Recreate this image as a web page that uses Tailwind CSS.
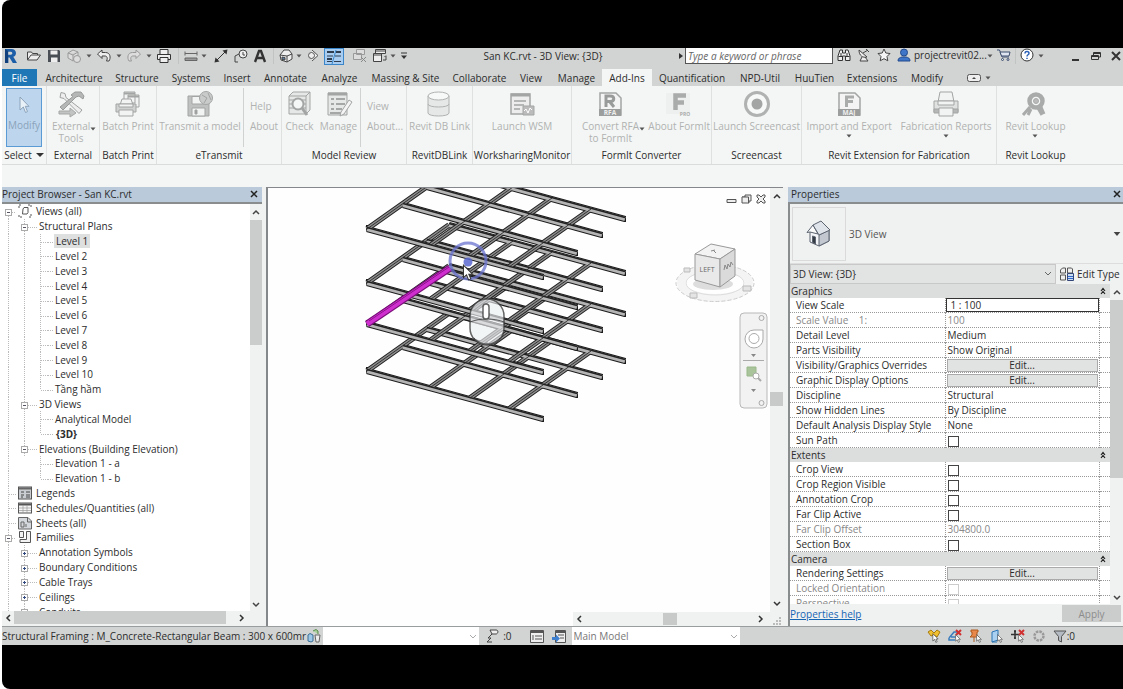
<!DOCTYPE html>
<html lang="en">
<head>
<meta charset="utf-8">
<title>San KC.rvt - 3D View: {3D}</title>
<script src="https://cdn.jsdelivr.net/npm/@tailwindcss/browser@4"></script>
</head>
<body class="bg-white font-['Open_Sans','Noto_Sans',sans-serif] text-[10px] leading-3 text-[#2c2c2c]">

<svg class="hidden" aria-hidden="true">
  <defs>
    <symbol id="down" viewBox="0 0 6 4"><path d="M0.5 0.5h5L3 3.5z" fill="#555"/></symbol>
    <symbol id="guide-v" viewBox="0 0 16 15"><path d="M8.5 0v15" stroke="#bbb" stroke-dasharray="1 1"/></symbol>
    <symbol id="guide-t" viewBox="0 0 16 15"><path d="M8.5 0v15M9 8.5h7" stroke="#bbb" stroke-dasharray="1 1" fill="none"/></symbol>
    <symbol id="guide-l" viewBox="0 0 16 15"><path d="M8.5 0v8M9 8.5h7" stroke="#bbb" stroke-dasharray="1 1" fill="none"/></symbol>
    <symbol id="box-minus" viewBox="0 0 16 15"><path d="M8.5 0v15M12 8.5h4" stroke="#bbb" stroke-dasharray="1 1"/><rect x="5.500" y="5.500" width="6" height="6" fill="#fff" stroke="#aaa"/><path d="M7 8.500h3" stroke="#556"/></symbol>
    <symbol id="box-plus" viewBox="0 0 16 15"><path d="M8.5 0v15M12 8.5h4" stroke="#bbb" stroke-dasharray="1 1"/><rect x="5.500" y="5.500" width="6" height="6" fill="#fff" stroke="#aaa"/><path d="M7 8.500h3M8.500 7v3" stroke="#334a80"/></symbol>
    <symbol id="box-first" viewBox="0 0 16 15"><path d="M8.5 8v7M12 8.5h4" stroke="#bbb" stroke-dasharray="1 1"/><rect x="5.500" y="5.500" width="6" height="6" fill="#fff" stroke="#aaa"/><path d="M7 8.500h3" stroke="#556"/></symbol>
    <symbol id="dash" viewBox="0 0 6 15"><path d="M0 8.5h5" stroke="#bbb" stroke-dasharray="1 1"/></symbol>
    <symbol id="cursor" viewBox="0 0 10 15"><path d="M1 1v11l2.700-2.500L5.500 14l2-.9L5.700 9H9z" fill="#fff" stroke="#333" stroke-width=".9"/></symbol>

    <symbol id="tree-views" viewBox="0 0 14 14"><path d="M1 4V1h3M10 1h3v3M13 10v3h-3M4 13H1v-3" fill="none" stroke="#555" stroke-dasharray="2 1"/><path d="M5 5l1-1.500h4v5L9 10H4.500z" fill="#fff" stroke="#555"/></symbol>
    <symbol id="tree-legends" viewBox="0 0 14 14"><rect x=".5" y="1" width="13" height="12" fill="#c9cdd2" stroke="#555"/><path d="M1 2.500h12" stroke="#666" stroke-width="2"/><path d="M3 6h3M3 9h3M3 11h2M8 6h4M8 9h4M8 11h4" stroke="#444"/></symbol>
    <symbol id="tree-sched" viewBox="0 0 14 14"><rect x=".5" y="2" width="13" height="10" fill="#f4f4f4" stroke="#555"/><path d="M1 3.500h12" stroke="#555" stroke-width="2"/><path d="M1 7h12M1 9.500h12M5 4v8M9 4v8" stroke="#999" stroke-width=".7"/></symbol>
    <symbol id="tree-sheets" viewBox="0 0 14 14"><path d="M.5 1.500H10L13.500 5v8H.5z" fill="#d4d8dc" stroke="#666"/><path d="M9.500 1.500V6h4M3 11V6h3v5zM8 8v3" fill="none" stroke="#666"/></symbol>
    <symbol id="tree-families" viewBox="0 0 14 14"><path d="M1.500 1.500h4v6h-4zM8.500 1.500h4v11H2v-3h6.500z" fill="#f3f3f3" stroke="#555"/></symbol>

    <!-- One storey of framing: four parallel beams joined by four cross members -->
    <g id="cross-lines"><path d="M0 0L82-58M64 16L146-42M103 27L185-31M142 38L224-20"/></g>
    <g id="row-lines"><path d="M82-58L258-10M60-42L235 6M36-24L210 24M0 0L176 48"/></g>
    <g id="floor" fill="none">
      <use href="#cross-lines" stroke="#222" stroke-width="5.500"/>
      <use href="#row-lines" stroke="#1c1c1c" stroke-width="6"/>
      <path d="M258-13v6M235 3v6M210 21v6M176 45v6M0-4v6" stroke="#1c1c1c" stroke-width="2"/>
      <use href="#cross-lines" stroke="#8e8e8e" stroke-width="3.500"/>
      <use href="#row-lines" stroke="#b4b4b4" stroke-width="4"/>
      <use href="#cross-lines" stroke="#333" stroke-width="1"/>
      <use href="#row-lines" stroke="#222" stroke-width="1.500" transform="translate(0 -1.500)"/>
    </g>
  </defs>
</svg>

<div class="flex h-screen flex-col pl-0.5">
  <div class="h-12 shrink-0 rounded-tl-lg bg-black"></div>

  <!-- Title bar -->
  <header class="flex h-5 shrink-0 items-center bg-[#d2d4d3]">
    <div class="flex h-full w-[410px] shrink-0 items-start">
      <button aria-label="Application menu" class="flex h-4 w-4 justify-center"><svg class="h-4 w-4" viewBox="0 0 16 16"><path d="M3 1h6.500c5.500 0 5.800 6.800 1.800 7.800L15 15h-4.200L7.500 9.500H6.200V15H3z" fill="#1d5ea8"/><path d="M3 1l3.200 2v12H3z" fill="#12407c"/><path d="M6.200 3.800h2.600c2 0 2 3 0 3H6.200z" fill="#d2d4d3"/></svg></button>
      <button aria-label="Open" class="ml-1.5 flex h-4 w-5 justify-center"><svg class="h-4 w-4" viewBox="0 0 16 16" fill="#eee" stroke="#444"><path d="M1.500 12V4h4l1 1.500h5V7"/><path d="M1.500 12L5 7h9.500L11 12z"/></svg></button>
      <button aria-label="Save" class="flex h-4 w-5 justify-center"><svg class="h-4 w-4" viewBox="0 0 16 16"><path d="M2 2h11l1 1v11H2z" fill="#4a4f55"/><path d="M4.500 2.500h7v4h-7zM5 9.500h6.500V14H5z" fill="#eee"/></svg></button>
      <button aria-label="Synchronize" class="flex h-4 w-5 justify-center"><svg class="h-4 w-4" viewBox="0 0 16 16" fill="#ddd" stroke="#999"><path d="M2 5l5-3 5 2v5l-5 4-5-3zM2 5l5 2 5-3M7 7v6"/><circle cx="11" cy="11" r="3.500"/></svg></button>
      <svg class="mx-0.5 mt-1.5 h-1 w-1.5"><use href="#down"/></svg>
      <button aria-label="Undo" class="flex h-4 w-5 justify-center"><svg class="h-4 w-4" viewBox="0 0 16 16" fill="#eee" stroke="#444"><path d="M1.500 6L6 2v2.500h3.500c5 0 5.500 5.500 3.500 8.500h-2.500c1.500-3 .5-5-1.500-5H6v2.500z"/></svg></button>
      <svg class="mx-0.5 mt-1.5 h-1 w-1.5"><use href="#down"/></svg>
      <button aria-label="Redo" class="flex h-4 w-5 justify-center"><svg class="h-4 w-4" viewBox="0 0 16 16" fill="#ddd" stroke="#999"><path d="M14.500 6L10 2v2.500H6.500C1.500 4.500 1 10 3 13h2.500C4 10 5 8 7 8h3v2.500z"/></svg></button>
      <svg class="mx-0.5 mt-1.5 h-1 w-1.5"><use href="#down"/></svg>
      <button aria-label="Print" class="flex h-4 w-5 justify-center"><svg class="h-4 w-4" viewBox="0 0 16 16" fill="#eee" stroke="#333"><path d="M4 7V1.500h8V7"/><path d="M1.500 6.500h13v5h-13z"/><path d="M4 9.500h8v5H4z"/></svg></button>
      <span class="mx-1 h-4 w-px bg-[#c2c4c3]"></span>
      <button aria-label="Measure" class="flex h-4 w-4 justify-center"><svg class="h-4 w-4" viewBox="0 0 16 16" fill="none" stroke="#666"><path d="M2 5.500h12M2 3.500v4M14 3.500v4"/><path d="M2 10h12v2.500H2z" fill="#999"/></svg></button>
      <svg class="mx-0.5 mt-1.5 h-1 w-1.5"><use href="#down"/></svg>
      <button aria-label="Aligned dimension" class="ml-0.5 flex h-4 w-5 justify-center"><svg class="h-4 w-4" viewBox="0 0 16 16" stroke="#333" fill="#333"><path d="M3 13L13 3"/><path d="M1.500 14.500l1-5 4 4zM14.500 1.500l-1 5-4-4z" stroke="none"/></svg></button>
      <button aria-label="Tag by category" class="flex h-4 w-5 justify-center"><svg class="h-4 w-4" viewBox="0 0 16 16" stroke="#444" fill="none"><path d="M2 14V8l4-2"/><circle cx="10" cy="6" r="4" fill="#eee"/><path d="M10 4v3h2M2 14h3"/></svg></button>
      <button aria-label="Text" class="flex h-4 w-[18px] justify-center"><svg class="h-4 w-4" viewBox="0 0 16 16"><path d="M3 14L7 3h2l4 11M5 10h6.500" fill="none" stroke="#333" stroke-width="2.400"/></svg></button>
      <span class="mx-1 h-4 w-px bg-[#c2c4c3]"></span>
      <button aria-label="Default 3D view" class="flex h-4 w-4 justify-center"><svg class="h-4 w-4" viewBox="0 0 16 16" stroke="#444" fill="#eee"><path d="M2 7l4-5h5l3 4v5l-5 3-6-2z"/><path d="M2 7l7 1 5-2M9 8v6" fill="none"/><path d="M4 9l3 .5V12l-3-.5z" fill="#5a7ba0"/></svg></button>
      <svg class="mx-0.5 mt-1.5 h-1 w-1.5"><use href="#down"/></svg>
      <button aria-label="Section" class="flex h-4 w-[18px] justify-center"><svg class="h-4 w-4" viewBox="0 0 16 16" stroke="#555" fill="#eee"><path d="M7 2l6 5.500L7 13"/><circle cx="6.500" cy="7.500" r="3"/></svg></button>
      <button aria-label="Thin lines" class="mx-0.5 flex h-[17px] w-5 items-center justify-center border border-[#3a86c8] bg-[#a9cdf0]"><svg class="h-4 w-4" viewBox="0 0 16 16" stroke="#2e3d50"><path d="M1 3h7M10 3h5" stroke-width="2"/><path d="M1 7h6M9 7h6M1 12.500h5M8 12.500h7"/><path d="M1 10h5" stroke-width="2"/><path d="M10 1L6 15" stroke="#3a86c8"/></svg></button>
      <button aria-label="Close hidden windows" class="ml-1 flex h-4 w-5 justify-center"><svg class="h-4 w-4" viewBox="0 0 16 16" stroke="#999" fill="#ddd"><path d="M4.500 1.500h8v5h-8zM1.500 5.500h8v6h-8z"/><path d="M9 9l5 5M14 9l-5 5" stroke="#888"/></svg></button>
      <button aria-label="Switch windows" class="flex h-4 w-5 justify-center"><svg class="h-4 w-4" viewBox="0 0 16 16" stroke="#444" fill="#eee"><path d="M3.500 1.500h10v4h-10zM1.500 5.500h8v8h-8z"/><path d="M1.500 7h8M3.500 3h10" /><path d="M11 12h3V8M12.500 9L14 7.500" fill="none"/></svg></button>
      <svg class="mr-1 mt-1.5 h-1 w-1.5"><use href="#down"/></svg>
      <button aria-label="Customize toolbar" class="flex h-4 w-2 items-center"><svg class="h-2 w-2" viewBox="0 0 8 8"><path d="M1 1h6" stroke="#333"/><path d="M1 3.500h6L4 7z" fill="#333"/></svg></button>
    </div>
    <h1 class="flex-1 pb-1 text-center">San KC.rvt - 3D View: {3D}</h1>
    <div class="flex h-full w-[449px] shrink-0 items-start">
      <svg class="ml-1 mt-1 h-2 w-1.5" viewBox="0 0 6 8"><path d="M1 1l4 3-4 3z" fill="#333"/></svg>
      <input aria-label="Search" placeholder="Type a keyword or phrase" class="ml-px h-4 w-[148px] border border-t-0 border-[#555] bg-white px-0.5 italic placeholder:text-[#666]">
      <button aria-label="Find" class="ml-1"><svg class="h-3.5 w-3.5" viewBox="0 0 14 14" fill="#eee" stroke="#333"><path d="M3 2h2.500v3H8.500V2H11l2 6v4.500H8.500V8h-3v4.500H1V8z"/><path d="M1.500 8.500h4M8.500 8.500h4M4 5v3M10 5v3"/></svg></button>
      <button aria-label="Communication center" class="ml-1.5"><svg class="h-3.5 w-3.5" viewBox="0 0 14 14" fill="#eee" stroke="#444"><path d="M2 2c0 6 4 8 8 7zM5 9l-2 4h8l-3-4"/><path d="M6 5l5-3M9 1l3 3"/></svg></button>
      <button aria-label="Favorites" class="ml-1.5"><svg class="h-3.5 w-3.5" viewBox="0 0 14 14" fill="#f5f5f5" stroke="#444"><path d="M7 1l1.800 4 4.200.5-3 3 .8 4.300L7 10.700 3.200 12.800 4 8.500l-3-3L5.200 5z"/></svg></button>
      <button class="ml-1.5 flex items-center gap-[3px]"><svg class="h-3.5 w-3.5" viewBox="0 0 14 14" fill="#3f75c9" stroke="#234a8c"><circle cx="7" cy="4.500" r="3.500"/><path d="M1 13c0-3 2-3.500 4-4h4c2 .5 4 1 4 4z"/></svg>projectrevit02...</button>
      <svg class="mt-1.5 h-1 w-1.5 shrink-0"><use href="#down"/></svg>
      <button aria-label="App store" class="ml-1"><svg class="h-3.5 w-3.5" viewBox="0 0 14 14" fill="#dfe6f2" stroke="#3c4c6c"><path d="M0 2h2.500L5 9h7"/><path d="M3 4h10l-1 4H4.500z"/><circle cx="5.500" cy="11.500" r="1"/><circle cx="11" cy="11.500" r="1"/></svg></button>
      <span class="mx-1 h-4 w-px bg-[#c2c4c3]"></span>
      <button aria-label="Help"><svg class="h-3.5 w-3.5" viewBox="0 0 14 14" fill="#fff" stroke="#333"><circle cx="7" cy="7" r="6"/><path d="M5 5.500c0-3 4-2.500 4-.3C9 7 7 6.500 7 8.500M7 9.800V11" fill="none" stroke="#2c62b8" stroke-width="1.500"/></svg></button>
      <svg class="ml-1 mt-1.5 h-1 w-1.5 shrink-0"><use href="#down"/></svg>
      <div class="ml-auto flex gap-2 pr-px">
        <button aria-label="Minimize"><svg class="h-4 w-3" viewBox="0 0 12 16"><path d="M2 12h7" stroke="#333" stroke-width="2"/></svg></button>
        <button aria-label="Restore"><svg class="h-4 w-3" viewBox="0 0 12 16" fill="none" stroke="#333"><path d="M3.500 7V4.500h7V9H8.500"/><path d="M1.500 7.500h7v4h-7zM1.500 8.500h7M3.500 5.500h7"/></svg></button>
        <button aria-label="Close"><svg class="h-4 w-3" viewBox="0 0 12 16"><path d="M2 4l8 8M10 4l-8 8" stroke="#333" stroke-width="2"/></svg></button>
      </div>
    </div>
  </header>

  <!-- Ribbon tabs -->
  <nav class="flex h-[18px] shrink-0 items-stretch bg-[#d2d4d3] pt-px">
    <button class="w-[35px] bg-[#1f77b5] text-white">File</button>
    <button class="w-[74px]">Architecture</button>
    <button class="w-[52px]">Structure</button>
    <button class="w-14">Systems</button>
    <button class="w-9">Insert</button>
    <button class="w-[61px]">Annotate</button>
    <button class="w-[47px]">Analyze</button>
    <button class="w-[85px]">Massing &amp; Site</button>
    <button class="w-[63px]">Collaborate</button>
    <button class="w-10">View</button>
    <button class="w-[51px]">Manage</button>
    <button class="w-[50px] bg-[#f4f6f5]">Add-Ins</button>
    <button class="w-20">Quantification</button>
    <button class="w-14">NPD-Util</button>
    <button class="w-[53px]">HuuTien</button>
    <button class="w-[62px]">Extensions</button>
    <button class="w-12">Modify</button>
    <button aria-label="Minimize ribbon" class="ml-4 flex items-center gap-1"><svg class="h-2 w-3.5" viewBox="0 0 14 8"><rect x=".5" y=".5" width="13" height="7" rx="2" fill="#eee" stroke="#555"/><path d="M5 5h4L7 3z" fill="#444"/></svg><svg class="h-1 w-1.5"><use href="#down"/></svg></button>
  </nav>

  <!-- Ribbon panels -->
  <section class="flex h-[79px] shrink-0 border-b border-[#d9dcdb] bg-[#f4f6f5] text-[#b0b2b1]">
    <div class="flex w-[45px] shrink-0 flex-col items-center border-r border-[#dfe1e0]">
      <button class="mt-0.5 flex h-[59px] w-9 flex-col items-center border border-[#5a9bd5] bg-[#bdd6ee] pt-0.5 text-[#8ba3ba]">
        <svg class="h-7 w-5" viewBox="0 0 20 28"><path d="M6 6v13l3.300-3 2.200 5.500 2-.9-2.200-5.300H15z" fill="#e8f0f8" stroke="#8ba3ba"/></svg>Modify</button>
      <button class="flex h-4 items-center gap-1 text-[#2c2c2c]">Select <svg class="h-1.5 w-2" viewBox="0 0 6 4"><path d="M0 .5h6L3 3.500z" fill="#333"/></svg></button>
    </div>

    <div class="flex w-[53px] shrink-0 flex-col items-center border-r border-[#dfe1e0]">
      <button class="flex h-[61px] items-center pl-0.5 pt-1"><span class="flex h-full flex-col items-center">
        <svg class="mb-0.5 h-7 w-7" viewBox="0 0 28 28"><path d="M2 21h11v-3l6 5-6 4v-3H2z" fill="#c2c4c3" stroke="#a5a7a6"/><path d="M4 2.500l4 1 1 4L25 20l-3 3.500L7 8.500l-4-1z" fill="#eee" stroke="#a0a2a1"/><path d="M14 5l4-3h6l3 4-1 3-4-3-3 1L6 20l-3-3L16 6.500z" fill="#b5b7b6" stroke="#999b9a"/></svg>
        <span class="w-[38px] text-center">External Tools</span></span><svg class="mt-5 h-1 w-1.5 shrink-0"><use href="#down"/></svg></button>
      <span class="flex h-4 items-center text-[#2c2c2c]">External</span>
    </div>

    <div class="flex w-[57px] shrink-0 flex-col items-center border-r border-[#dfe1e0]">
      <button class="flex h-[61px] flex-col items-center whitespace-nowrap pt-1">
        <svg class="mb-0.5 h-7 w-7" viewBox="0 0 28 28" fill="#f2f3f3" stroke="#a3a5a4"><path d="M10 2h11v11H10zM14 5h11v12H14z" /><path d="M10 3.500h11M14 6.500h11" stroke-width="2"/><path d="M6 15l2-6h9l2 6"/><path d="M2 14h20v8H2z" fill="#cfd1d0"/><path d="M5 14h14v3H5zM5 20h14v6H5z"/></svg>Batch Print</button>
      <span class="flex h-4 items-center text-[#2c2c2c]">Batch Print</span>
    </div>

    <div class="flex w-[125px] shrink-0 flex-col border-r border-[#dfe1e0]">
      <div class="flex h-[61px]">
        <button class="flex w-[86px] flex-col items-center whitespace-nowrap pt-1">
          <svg class="mb-0.5 h-7 w-7" viewBox="0 0 28 28" fill="#f2f3f3" stroke="#a3a5a4"><path d="M2 6h20l1 1v19H2z" fill="#bfc1c0"/><path d="M6 6.500h12V14H6z"/><path d="M6 18h13v8H6z"/><path d="M9 20h2v4H9z" fill="#999"/><circle cx="20" cy="8" r="6.500" fill="#c9cbca"/><path d="M16 5l5 3-3 5M22 3l3 7" fill="none"/></svg>Transmit a model</button>
        <div class="mt-0.5 flex h-[59px] w-[38px] flex-col items-start border-l border-[#d0d2d1] pl-1.5 pt-3"><button class="mb-2">Help</button><button>About</button></div>
      </div>
      <span class="flex h-4 items-center justify-center text-[#2c2c2c]">eTransmit</span>
    </div>

    <div class="flex w-[125px] shrink-0 flex-col border-r border-[#dfe1e0]">
      <div class="flex h-[61px]">
        <button class="flex w-[35px] flex-col items-center pt-1">
          <svg class="mb-0.5 h-7 w-7" viewBox="0 0 28 28" fill="#e6e8e7" stroke="#a3a5a4"><path d="M3 6l4-4h17v18l-4 4H3z"/><path d="M3 6h17v18M20 6l4-4M3 10h17M3 14h17M3 18h17" fill="none"/><circle cx="12" cy="14" r="5.500" fill="#f5f6f6" stroke-width="2"/><path d="M16 18l5 7" stroke-width="3"/></svg>Check</button>
        <button class="flex w-[43px] flex-col items-center pt-1">
          <svg class="mb-0.5 h-7 w-7" viewBox="0 0 28 28" fill="#e6e8e7" stroke="#a3a5a4"><path d="M3 3h19v22H3z"/><path d="M3 4h19" stroke-width="3"/><path d="M6 9h3M6 14h3M6 19h3M11 9h9M11 14h9M11 19h6M5 23h12" stroke="#8f9190" stroke-width="1.500"/><path d="M24 10l3 2-8 12-4 2 1-4z" fill="#f5f5f5"/></svg>Manage</button>
        <div class="mt-0.5 flex h-[59px] w-[46px] flex-col items-start border-l border-[#d0d2d1] pl-1.5 pt-3"><button class="mb-2">View</button><button>About...</button></div>
      </div>
      <span class="flex h-4 items-center justify-center text-[#2c2c2c]">Model Review</span>
    </div>

    <div class="flex w-[66px] shrink-0 flex-col items-center border-r border-[#dfe1e0]">
      <button class="flex h-[61px] flex-col items-center whitespace-nowrap pt-1">
        <svg class="mb-0.5 h-7 w-7" viewBox="0 0 28 28" fill="#e6e8e7" stroke="#b0b2b1"><path d="M3 6v17c0 4 21 4 21 0V6z"/><path d="M3 14c0 4 21 4 21 0" fill="none"/><ellipse cx="13.500" cy="6" rx="10.500" ry="4" fill="#f7f8f8"/></svg>Revit DB Link</button>
      <span class="flex h-4 items-center text-[#2c2c2c]">RevitDBLink</span>
    </div>

    <div class="flex w-[99px] shrink-0 flex-col items-center border-r border-[#dfe1e0]">
      <button class="flex h-[61px] flex-col items-center whitespace-nowrap pt-1">
        <svg class="mb-0.5 h-7 w-7" viewBox="0 0 28 28" fill="#ededed" stroke="#a3a5a4"><path d="M3 4h19v20H3z" stroke-width="1.500"/><path d="M3 5h19" stroke-width="3"/><path d="M6 11h12M6 15h10M6 19h6" stroke-width="1.500"/><path d="M15 16h11v9H15z" fill="#bbb"/><path d="M16 21l2-2 2 4 2-5 2 2" fill="none" stroke="#fff"/></svg>Launch WSM</button>
      <span class="flex h-4 items-center text-[#2c2c2c]">WorksharingMonitor</span>
    </div>

    <div class="flex w-[140px] shrink-0 flex-col border-r border-[#dfe1e0]">
      <div class="flex h-[61px] justify-between">
        <button class="ml-2.5 flex items-center pt-1"><span class="flex h-full flex-col items-center">
          <svg class="mb-0.5 h-7 w-7 shrink-0" viewBox="0 0 28 28"><path d="M4 3h16l5 5v17H4z" fill="#f4f4f4" stroke="#a3a5a4" stroke-width="1.500"/><path d="M3 19h22v7H3z" fill="#9c9e9d"/><path d="M10 17V6h4c5 0 5 5.500 0 5.500h-4M14 12l4 5" fill="none" stroke="#999b9a" stroke-width="3"/><text x="14" y="25" font-size="6.500" font-weight="700" fill="#eee" text-anchor="middle">RFA</text></svg>
          <span class="whitespace-nowrap text-center">Convert RFA<br>to FormIt</span></span><svg class="mt-5 h-1 w-1.5 shrink-0"><use href="#down"/></svg></button>
        <button class="flex flex-col items-center whitespace-nowrap pt-1 pr-px">
          <svg class="mb-0.5 h-7 w-7" viewBox="0 0 28 28"><path d="M1 3h24v21H1z" fill="#eeefef"/><path d="M10.500 20V5.500H21M10.500 12.500H19" fill="none" stroke="#aaacab" stroke-width="4.500"/><text x="20" y="26" font-size="5" font-weight="700" fill="#aaacab" text-anchor="middle">PRO</text></svg>About FormIt</button>
      </div>
      <span class="flex h-4 items-center justify-center text-[#2c2c2c]">FormIt Converter</span>
    </div>

    <div class="flex w-[90px] shrink-0 flex-col items-center border-r border-[#dfe1e0]">
      <button class="flex h-[61px] flex-col items-center whitespace-nowrap pt-1">
        <svg class="mb-0.5 h-7 w-7" viewBox="0 0 28 28"><circle cx="14" cy="14" r="11.500" fill="#f7f8f8" stroke="#b0b2b1" stroke-width="3"/><circle cx="14" cy="14" r="5.500" fill="#a3a5a4"/></svg>Launch Screencast</button>
      <span class="flex h-4 items-center text-[#2c2c2c]">Screencast</span>
    </div>

    <div class="flex w-[195px] shrink-0 flex-col border-r border-[#dfe1e0]">
      <div class="flex h-[61px] justify-around">
        <button class="flex flex-col items-center whitespace-nowrap pt-1">
          <svg class="mb-0.5 h-7 w-7" viewBox="0 0 28 28"><path d="M4 3h16l5 5v17H4z" fill="#f4f4f4" stroke="#a3a5a4" stroke-width="1.500"/><path d="M3 19h22v7H3z" fill="#9c9e9d"/><path d="M11.500 17V7H19M11.500 11.500H18" fill="none" stroke="#aaacab" stroke-width="3"/><text x="14" y="25" font-size="6.500" font-weight="700" fill="#eee" text-anchor="middle">MAJ</text></svg>Import and Export
          <svg class="mt-0.5 h-1 w-1.5"><use href="#down"/></svg></button>
        <button class="flex flex-col items-center whitespace-nowrap pt-1">
          <svg class="mb-0.5 h-7 w-7" viewBox="0 0 28 28" fill="#f2f3f3" stroke="#a3a5a4"><path d="M6 12l2-10h12l2 10"/><path d="M2 11h24v11H2z" fill="#e0e2e1"/><path d="M6 11h16v4H6z"/><path d="M2 19h24v4H2z" fill="#b5b7b6"/><path d="M7 18h14v8H7z"/></svg>Fabrication Reports
          <svg class="mt-0.5 h-1 w-1.5"><use href="#down"/></svg></button>
      </div>
      <span class="flex h-4 items-center justify-center text-[#2c2c2c]">Revit Extension for Fabrication</span>
    </div>

    <div class="flex w-[77px] shrink-0 flex-col items-center">
      <button class="flex h-[61px] flex-col items-center whitespace-nowrap pt-1">
        <svg class="mb-0.5 h-7 w-7" viewBox="0 0 28 28" fill="none" stroke="#a9abaa"><path d="M9 17l-7 8M10 19l-3 6M17 18l4 7M20 17l3 7" stroke-width="3"/><circle cx="15" cy="11" r="6.500" stroke-width="4.500"/><circle cx="15" cy="11" r="2.500" fill="#bbb"/></svg>Revit Lookup
        <svg class="mt-0.5 h-1 w-1.5"><use href="#down"/></svg></button>
      <span class="flex h-4 items-center text-[#2c2c2c]">Revit Lookup</span>
    </div>
  </section>
  <div class="h-[22px] shrink-0 bg-[#f4f6f5]"></div>

  <!-- Workspace -->
  <main class="flex min-h-0 flex-1 bg-[#f0f1f1]">
    <aside class="flex w-[260px] shrink-0 flex-col">
      <div class="flex h-[15px] shrink-0 items-center justify-between bg-[#bacadb] pb-px pr-1"><h2>Project Browser - San KC.rvt</h2><button aria-label="Close project browser"><svg class="h-2 w-2" viewBox="0 0 8 8"><path d="M1 1l6 6M7 1L1 7" stroke="#222" stroke-width="1.500"/></svg></button></div>
      <div class="h-0.5 shrink-0 bg-[#8a8d8d]"></div>
      <div class="flex min-h-0 flex-1 bg-white">
        <div class="min-w-0 flex-1 overflow-hidden"><ul id="tree" class="grid h-[415px] auto-rows-fr"></ul></div>
        <div class="flex w-3 flex-col items-center bg-[#f0f1f1]">
          <svg class="my-1 h-2 w-2" viewBox="0 0 8 8"><path d="M1 6l3-3 3 3" fill="none" stroke="#444" stroke-width="1.500"/></svg>
          <div class="h-[125px] w-full bg-[#cbcccc]"></div>
          <svg class="mb-0.5 mt-auto h-2 w-2" viewBox="0 0 8 8"><path d="M1 2l3 3 3-3" fill="none" stroke="#444" stroke-width="1.500"/></svg>
        </div>
      </div>
      <div class="flex h-[13px] shrink-0 items-center pl-0.5 pr-4">
        <svg class="h-2 w-2" viewBox="0 0 8 8"><path d="M6 1L3 4l3 3" fill="none" stroke="#333" stroke-width="1.500"/></svg>
        <div class="ml-0.5 h-full w-[212px] bg-[#cbcccc]"></div>
        <svg class="ml-auto h-2 w-2" viewBox="0 0 8 8"><path d="M2 1l3 3-3 3" fill="none" stroke="#333" stroke-width="1.500"/></svg>
      </div>
      <div class="h-0.5 shrink-0"></div>
    </aside>

    <section class="relative ml-1 flex min-w-0 flex-1 flex-col border-l-2 border-t border-[#85888a] bg-[#fdfefd]">
      <div class="flex min-h-0 flex-1">
        <div class="relative min-w-0 flex-1 overflow-hidden">
          <!-- Model canvas -->
          <svg class="absolute left-0 top-0 h-[424px] w-[502px]" viewBox="268 188 502 424" role="img" aria-label="Structural framing model">
            <use href="#floor" transform="translate(367 371)"/>
            <use href="#floor" transform="translate(367 324)"/>
            <use href="#floor" transform="translate(367 283)"/>
            <use href="#floor" transform="translate(367 229)"/>
            <path d="M367 324L450 268" stroke="#7a0f7a" stroke-width="7"/>
            <path d="M367 324L450 268" stroke="#cf2fcf" stroke-width="5"/>
            <path d="M369 321L449 267" stroke="#8c128c"/>
            <circle cx="468" cy="261" r="18" fill="none" stroke="#6872cf" stroke-opacity=".75" stroke-width="3"/>
            <circle cx="468" cy="262" r="4.500" fill="#5a68d0" fill-opacity=".85"/>
            <g stroke="#333" stroke-opacity=".75">
              <rect x="470" y="299" width="34" height="46" rx="17" fill="#eceff2" fill-opacity=".65" stroke-width="1.500"/>
              <path d="M470 322c10-4 24-4 34 0M474 338c8 8 18 8 26 0" fill="none"/>
              <rect x="483" y="304" width="6" height="15" rx="3" fill="#fff" stroke-width="1.500"/>
            </g>
            <use href="#cursor" x="462" y="264" width="12" height="17"/>
            <!-- View cube -->
            <ellipse cx="715" cy="283" rx="34" ry="15" fill="none" stroke="#f4f4f4" stroke-width="8"/>
            <ellipse cx="715" cy="283" rx="39" ry="18.500" fill="none" stroke="#ccc" stroke-dasharray="4 2"/>
            <ellipse cx="715" cy="283" rx="29" ry="12" fill="none" stroke="#ddd"/>
            <ellipse cx="713" cy="284" rx="20" ry="6" fill="#ddd"/>
            <path d="M690 293h7v5h-7zM743 286h8v5h-8zM684 268h6v4h-6z" fill="#e4e4e4" stroke="#bbb"/>
            <g stroke="#999"><path d="M695 254l16-10 24 5-15 10z" fill="#f3f3f3"/><path d="M695 254l25 5v28l-25-7z" fill="#e9e9e9"/><path d="M720 259l15-10v27l-15 11z" fill="#dadada"/></g>
            <text x="707" y="272" font-size="7" fill="#666" text-anchor="middle">LEFT</text>
            <path d="M724 270l1-5 2 4 1-5 2 3 1-5 2 3M711 251l4-1M713 250l3 3" fill="none" stroke="#888"/>
            <!-- Navigation bar -->
            <rect x="740" y="313" width="27" height="95" rx="4" fill="#f1f2f1" stroke="#b8b8b8"/>
            <g fill="none" stroke="#aaa"><circle cx="761.500" cy="318" r="2.500"/><circle cx="761.500" cy="403" r="2.500"/><path d="M754 330h9v9a9 9 0 1 1-9-9z" fill="#fff"/><circle cx="754" cy="338.500" r="5"/><path d="M743 360.500h21"/><path d="M747 367h9v9h-9z" fill="#a9c49a" stroke="#9ab88a"/><circle cx="756" cy="376" r="3" fill="#fff"/><path d="M758 378l3 3" stroke-width="2"/></g>
            <path d="M751 354h5l-2.500 3zM751 389h5l-2.500 3z" fill="#888"/>
            <g fill="#eee" stroke="#555"><path d="M727 199.500h9v3h-9z"/><path d="M745 195h6v6h-2v2h-7v-6h3z"/><path d="M742 197h6.500v6"/><path d="M757 195h2l2 2 2-2h2v2l-2 2 2 2v2h-2l-2-2-2 2h-2v-2l2-2-2-2z"/></g>
          </svg>
        </div>
        <div class="flex w-[13px] flex-col items-center bg-[#f0f1f1]">
          <svg class="mt-1 h-2 w-2" viewBox="0 0 8 8"><path d="M1 6l3-3 3 3" fill="none" stroke="#333" stroke-width="1.500"/></svg>
          <div class="mt-[192px] h-3.5 w-full bg-[#c8c9c9]"></div>
          <svg class="mb-1 mt-auto h-2 w-2" viewBox="0 0 8 8"><path d="M1 2l3 3 3-3" fill="none" stroke="#333" stroke-width="1.500"/></svg>
        </div>
      </div>
      <div class="flex h-3.5 shrink-0 items-center justify-end">
        <div class="flex h-full w-[197px] items-center bg-[#f0f1f1] pl-0.5">
          <svg class="h-2 w-2" viewBox="0 0 8 8"><path d="M6 1L3 4l3 3" fill="none" stroke="#333" stroke-width="1.500"/></svg>
          <div class="ml-20 h-3 w-3.5 bg-[#c8c9c9]"></div>
          <svg class="ml-20 h-2 w-2" viewBox="0 0 8 8"><path d="M2 1l3 3-3 3" fill="none" stroke="#333" stroke-width="1.500"/></svg>
        </div>
        <svg class="h-full w-[13px] bg-[#f0f1f1]" viewBox="0 0 13 14"><path d="M9 5h2v2H9zM6 8h2v2H6zM9 8h2v2H9zM3 11h2v2H3zM6 11h2v2H6zM9 11h2v2H9z" fill="#bbb"/></svg>
      </div>
    </section>

    <aside class="ml-[5px] flex w-[335px] shrink-0 flex-col">
      <div class="flex h-[15px] shrink-0 items-center justify-between bg-[#bacadb] pb-px pl-[3px] pr-0.5"><h2>Properties</h2><button aria-label="Close properties"><svg class="h-2 w-2" viewBox="0 0 8 8"><path d="M1 1l6 6M7 1L1 7" stroke="#222" stroke-width="1.500"/></svg></button></div>
      <div class="flex min-h-0 flex-1 flex-col border-l-2 border-t-2 border-[#8a8d8d] bg-[#f0f1f1]">
        <button class="flex h-[60px] shrink-0 items-center border-b border-[#ddd] p-0.5 text-[#555]">
          <span class="flex h-[54px] w-[54px] items-center justify-center border border-[#dadada]">
            <svg class="h-7 w-7" viewBox="0 0 28 28" stroke="#5c6470"><path d="M5 12v10l9 4 10-5V11L14 5z" fill="#f2f4f7"/><path d="M14 15v11l10-5V10z" fill="#c3c8d0"/><path d="M2 12.500L8 5l5 9-8-2z" fill="#fafafa"/><path d="M8 5l8-4 9 9-11 5z" fill="#dfe3ea"/><path d="M7.500 16l3 1v7l-3-1.500z" fill="#333a44"/></svg>
          </span>
          <span class="ml-[3px]">3D View</span>
          <svg class="ml-auto h-1.5 w-2" viewBox="0 0 6 4"><path d="M.5.5h5L3 3.500z" fill="#444"/></svg>
        </button>
        <div class="flex h-5 shrink-0 items-center">
          <div class="relative h-full flex-1"><select aria-label="Instance filter" class="h-full w-full appearance-none border border-[#c8c8c8] bg-[#e2e3e3] pl-0.5"><option>3D View: {3D}</option></select>
            <svg class="pointer-events-none absolute right-1 top-1.5 h-2 w-2" viewBox="0 0 8 8"><path d="M1 2l3 3 3-3" fill="none" stroke="#666"/></svg></div>
          <button class="flex w-[67px] items-center gap-[3px] pl-1 whitespace-nowrap"><svg class="h-3.5 w-3.5 shrink-0" viewBox="0 0 14 14" fill="#eee" stroke="#555"><path d="M.5 3l2-2h3v5h-5zM7.500 1h4l1 1v4h-5zM.5 8h5v5h-5z"/><path d="M7.500 6.500h6v7h-6z" fill="#cde" stroke="#347"/><path d="M8 9.500h5M8 11.500h5" stroke="#36c"/></svg>Edit Type</button>
        </div>
        <div class="flex min-h-0 flex-1">
          <div class="min-w-0 flex-1 overflow-hidden bg-white"><table class="h-[327px] w-full table-fixed border-collapse"><colgroup><col class="w-[155px]"><col><col class="w-2.5"></colgroup><tbody id="props"></tbody></table></div>
          <div class="flex w-[13px] flex-col items-center bg-[#f0f1f1]">
            <svg class="my-1 h-2 w-2 shrink-0" viewBox="0 0 8 8"><path d="M1 6l3-3 3 3" fill="none" stroke="#444" stroke-width="1.500"/></svg>
            <div class="h-[178px] w-full bg-[#cbcccc]"></div>
            <svg class="mb-0.5 mt-auto h-2 w-2" viewBox="0 0 8 8"><path d="M1 2l3 3 3-3" fill="none" stroke="#444" stroke-width="1.500"/></svg>
          </div>
        </div>
        <div class="flex h-[22px] shrink-0 items-start justify-between pb-1 pr-0.5"><a href="#help" class="mt-1 text-[#1464b4] underline">Properties help</a><button disabled class="mt-px h-[17px] w-[59px] bg-[#cbcccc] text-[#8c8c8c]">Apply</button></div>
      </div>
    </aside>
  </main>

  <!-- Status bar -->
  <footer class="flex h-[19px] shrink-0 items-center border-t border-[#9a9d9d] bg-[#d2d4d3] whitespace-nowrap">
    <span class="flex shrink-0 items-center gap-px pr-0.5"><span>Structural Framing : M_Concrete-Rectangular Beam : 300 x 600mr</span>
      <svg class="h-3.5 w-3.5 shrink-0" viewBox="0 0 14 14" fill="#9cc7e6" stroke="#3b6f96"><path d="M1 6l2-1.500L6 6v6l-2 1-3-1z"/><path d="M6 2l3-1.500L11 2v3" fill="#a8cf9a" stroke="#5a8a4c"/><path d="M8 6h5l-1 7H9z" fill="#eee" stroke="#666"/></svg></span>
    <div class="relative h-full w-[156px]"><select aria-label="Workset" class="h-full w-full appearance-none bg-white"><option></option></select><svg class="pointer-events-none absolute right-0.5 top-1.5 h-2 w-2" viewBox="0 0 8 8"><path d="M1 2l3 3 3-3" fill="none" stroke="#aaa"/></svg></div>
    <button class="ml-1.5 flex items-center gap-1"><svg class="h-3.5 w-3.5" viewBox="0 0 14 14" fill="#eee" stroke="#444"><path d="M5 1h6c3 0 2 4 0 4H7z"/><path d="M7 5l-4 4h3l-4 4h5" fill="none"/></svg>:0</button>
    <button aria-label="Design options" class="ml-[18px]"><svg class="h-3.5 w-3.5" viewBox="0 0 14 14" fill="#eee" stroke="#555"><path d="M.5 1.500h13v12H.5z"/><path d="M1 3h12" stroke-width="2"/><path d="M3 6v5M5 7h7M5 10h7"/></svg></button>
    <button aria-label="Add to set" class="ml-2"><svg class="h-3.5 w-3.5" viewBox="0 0 14 14" fill="#eee" stroke="#555"><path d="M3.500 1.500h10v12h-10z"/><path d="M4 3h9" stroke-width="2"/><path d="M6 6h6M8 9h4"/><path d="M0 8h4V5.500L8 9.500l-4 4V11H0z" fill="#3f7fd0" stroke="none"/></svg></button>
    <div class="relative ml-1.5 h-full w-[168px]"><select aria-label="Design option" class="h-full w-full appearance-none bg-white pl-0.5 text-[#777]"><option>Main Model</option></select><svg class="pointer-events-none absolute right-0.5 top-1.5 h-2 w-2" viewBox="0 0 8 8"><path d="M1 2l3 3 3-3" fill="none" stroke="#aaa"/></svg></div>
    <div class="ml-auto mr-12 flex items-center gap-[7px]">
      <button aria-label="Select links"><svg class="h-3.5 w-3.5" viewBox="0 0 14 14"><path d="M1 3l3-2 3 3 3-3 3 2-3 5-3-2-3 1z" fill="#f0c030" stroke="#a67c10"/><use href="#cursor" x="5" y="4" width="7" height="10"/></svg></button>
      <button aria-label="Select underlay"><svg class="h-3.5 w-3.5" viewBox="0 0 14 14"><path d="M1 9l5-6h5M1 9v2h6M3 8h6" fill="none" stroke="#3b7dbd" stroke-width="1.500"/><path d="M8 1l5 5M13 1L8 6" stroke="#d03030" stroke-width="2"/><use href="#cursor" x="7" y="5" width="6" height="9"/></svg></button>
      <button aria-label="Select pinned"><svg class="h-3.5 w-3.5" viewBox="0 0 14 14"><path d="M2 1h7v2H8v3l2 2H1l2-2V3H2zM5 8v5" fill="#e8884a" stroke="#b05a20"/><use href="#cursor" x="7" y="5" width="6" height="9"/></svg></button>
      <button aria-label="Select by face"><svg class="h-3.5 w-3.5" viewBox="0 0 14 14"><path d="M2 3l6-2v10l-6 2z" fill="#a9d0f0" stroke="#2b74b5"/><path d="M2 13h5" stroke="#2b74b5"/><use href="#cursor" x="7" y="5" width="6" height="9"/></svg></button>
      <button aria-label="Drag on selection"><svg class="h-3.5 w-3.5" viewBox="0 0 14 14"><path d="M4 1v9M0 5.500h8M3 2.500h2M3 9h2" stroke="#333" stroke-width="1.500"/><path d="M8 1l5 5M13 1L8 6" stroke="#d03030" stroke-width="2"/><use href="#cursor" x="7" y="5" width="6" height="9"/></svg></button>
      <button aria-label="Background processes"><svg class="h-3.5 w-3.5" viewBox="0 0 14 14"><circle cx="7" cy="7" r="4.500" fill="none" stroke="#999" stroke-width="2.500" stroke-dasharray="2.500 1"/></svg></button>
      <button class="flex items-center"><svg class="h-3.5 w-3.5" viewBox="0 0 14 14"><path d="M1 2h12L8.500 7.500V13l-3-1.500v-4z" fill="#b5bbc2" stroke="#555"/></svg>:0</button>
    </div>
  </footer>
  <div class="h-11 shrink-0 rounded-bl-lg bg-black"></div>
</div>

<script>
  // Tree rows: [guide cells, icon, label, state]. Cells: v line, t tee, l elbow, f first box, m open box, p closed box, b blank
  const tree = [
    ['f', 'tree-views', 'Views (all)'],
    ['vm', '', 'Structural Plans'],
    ['vvt', '', 'Level 1', 'selected'],
    ['vvt', '', 'Level 2'], ['vvt', '', 'Level 3'], ['vvt', '', 'Level 4'], ['vvt', '', 'Level 5'],
    ['vvt', '', 'Level 6'], ['vvt', '', 'Level 7'], ['vvt', '', 'Level 8'], ['vvt', '', 'Level 9'],
    ['vvt', '', 'Level 10'],
    ['vvl', '', 'Tầng hầm'],
    ['vm', '', '3D Views'],
    ['vvt', '', 'Analytical Model'],
    ['vvl', '', '{3D}', 'bold'],
    ['vm', '', 'Elevations (Building Elevation)'],
    ['vbt', '', 'Elevation 1 - a'],
    ['vbl', '', 'Elevation 1 - b'],
    ['t', 'tree-legends', 'Legends'],
    ['t', 'tree-sched', 'Schedules/Quantities (all)'],
    ['t', 'tree-sheets', 'Sheets (all)'],
    ['m', 'tree-families', 'Families'],
    ['vp', '', 'Annotation Symbols'], ['vp', '', 'Boundary Conditions'], ['vp', '', 'Cable Trays'],
    ['vp', '', 'Ceilings'], ['vp', '', 'Conduits'],
  ];
  const cells = { v: 'guide-v', t: 'guide-t', l: 'guide-l', f: 'box-first', m: 'box-minus', p: 'box-plus' };
  document.getElementById('tree').innerHTML = tree.map(([guides, icon, label, state]) => {
    const g = [...guides].map((c, i) => i === 0
      ? `<svg class="h-[15px] w-3.5 shrink-0" viewBox="2 0 14 15"><use href="#${cells[c]}" width="16" height="15"/></svg>`
      : `<svg class="h-[15px] w-4 shrink-0">${cells[c] ? `<use href="#${cells[c]}" width="16" height="15"/>` : ''}</svg>`).join('');
    const lead = icon ? `<svg class="ml-0.5 mr-1 h-3.5 w-3.5 shrink-0"><use href="#${icon}"/></svg>`
                      : `<svg class="h-[15px] w-1.5 shrink-0"><use href="#dash"/></svg>`;
    const look = state === 'selected' ? 'bg-[#dedfdf] px-0.5 h-3.5 leading-[14px]' : state === 'bold' ? 'pl-0.5 font-bold' : icon ? '' : 'pl-px';
    return `<li class="flex min-h-0 items-center whitespace-nowrap">${g}${lead}<span class="${look}">${label}</span></li>`;
  }).join('');

  // Property rows: [label, kind, value, disabled]
  const props = [
    ['Graphics', 'head'],
    ['View Scale', 'input', '1 : 100'],
    ['Scale Value    1:', 'text', '100', true],
    ['Detail Level', 'text', 'Medium'],
    ['Parts Visibility', 'text', 'Show Original'],
    ['Visibility/Graphics Overrides', 'edit'],
    ['Graphic Display Options', 'edit'],
    ['Discipline', 'text', 'Structural'],
    ['Show Hidden Lines', 'text', 'By Discipline'],
    ['Default Analysis Display Style', 'text', 'None'],
    ['Sun Path', 'check'],
    ['Extents', 'head'],
    ['Crop View', 'check'], ['Crop Region Visible', 'check'], ['Annotation Crop', 'check'], ['Far Clip Active', 'check'],
    ['Far Clip Offset', 'text', '304800.0', true],
    ['Section Box', 'check'],
    ['Camera', 'head'],
    ['Rendering Settings', 'edit'],
    ['Locked Orientation', 'check', '', true],
    ['Perspective', 'check', '', true],
  ];
  document.getElementById('props').innerHTML = props.map(([label, kind, value, off], i) => {
    if (kind === 'head') return `<tr class="bg-[#dcdddd]"><th colspan="3" class="p-0 text-left font-normal"><div class="flex h-3.5 items-center justify-between pl-px pr-1">${label}<svg class="h-2 w-1.5" viewBox="0 0 6 8"><path d="M1 4l2-2.500L5 4M1 7l2-2.500L5 7" fill="none" stroke="#222" stroke-width="1.200"/></svg></div></th></tr>`;
    const id = 'prop' + i;
    const field = {
      input: () => `<input id="${id}" value="${value}" class="block h-3.5 w-full border border-[#333] bg-white px-1">`,
      text: () => `<span id="${id}" class="block pl-0.5">${value}</span>`,
      edit: () => `<button id="${id}" class="mx-px block h-[13px] w-[151px] border border-[#aaa] bg-[#e1e2e2] leading-[11px]">Edit...</button>`,
      check: () => `<input id="${id}" type="checkbox" ${off ? 'disabled' : ''} class="ml-0.5 mt-0.5 block h-[11px] w-[11px] appearance-none border bg-white ${off ? 'border-[#ccc]' : 'border-[#444]'}">`,
    }[kind]();
    return `<tr class="border-b border-dotted border-[#999] ${off ? 'text-[#888]' : ''}"><th class="p-0 pl-1.5 text-left font-normal whitespace-pre"><label for="${id}">${label}</label></th><td class="border-x border-dotted border-[#999] p-0"><div class="flex h-3.5 items-center">${field}</div></td><td class="p-0"></td></tr>`;
  }).join('');
</script>
</body>
</html>
